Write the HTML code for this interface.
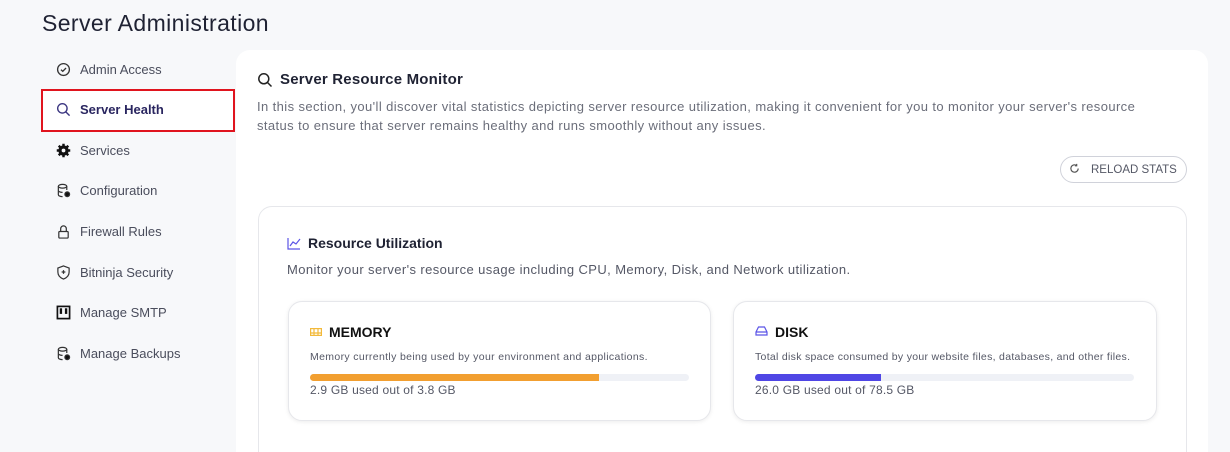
<!DOCTYPE html><html><head><style>
*{margin:0;padding:0;box-sizing:border-box}
html,body{width:1230px;height:452px;overflow:hidden}
body{background:#f7f8fa;font-family:"Liberation Sans",sans-serif;position:relative;color:#1f2233}
.a{position:absolute}
h1{position:absolute;left:42px;top:10px;font-size:23px;font-weight:400;color:#1f2233;letter-spacing:.4px}
.nav{left:56px;font-size:13px;color:#4a4d5c;display:flex;align-items:center;gap:9px}
.nav svg{width:15px;height:15px}
.panel{left:236px;top:50px;width:972px;height:402px;background:#fff;border-radius:14px 14px 0 0}
.card{background:#fff;border:1px solid #e6e7eb;border-radius:14px}
.sm{box-shadow:0 1px 4px rgba(0,0,0,.08)}
</style></head><body>
<h1>Server Administration</h1>
<div class="a nav" style="top:62px"><svg viewBox="0 0 16 16" fill="none" stroke="#333" stroke-width="1.4"><circle cx="8" cy="8" r="6.3"/><path d="M5.3 8.2l1.9 1.8 3.5-3.6"/></svg>Admin Access</div>
<div class="a" style="left:41px;top:89px;width:194px;height:43px;border:2px solid #e0141e;background:#fff"></div>
<div class="a nav" style="top:102px;color:#2a2660;font-weight:bold"><svg viewBox="0 0 16 16" fill="none" stroke="#3a3580" stroke-width="1.5"><circle cx="6.8" cy="6.8" r="5"/><path d="M10.5 10.5l4 4"/></svg>Server Health</div>
<div class="a nav" style="top:143px"><svg viewBox="0 0 16 16"><circle cx="8" cy="8" r="5.5" fill="#111"/><circle cx="8" cy="8" r="2" fill="#f7f8fa"/><path d="M8 0.8v3M8 12.2v3M0.8 8h3M12.2 8h3M2.9 2.9l2.1 2.1M11 11l2.1 2.1M2.9 13.1l2.1-2.1M11 5l2.1-2.1" stroke="#111" stroke-width="2.6"/></svg>Services</div>
<div class="a nav" style="top:183px"><svg viewBox="0 0 16 16" fill="none" stroke="#333" stroke-width="1.3"><ellipse cx="7" cy="3.5" rx="4.5" ry="2"/><path d="M2.5 3.5v9c0 1.1 2 2 4.5 2M11.5 3.5v4M2.5 8c0 1.1 2 2 4.5 2"/><circle cx="12" cy="12" r="2.5" fill="#111"/></svg>Configuration</div>
<div class="a nav" style="top:224px"><svg viewBox="0 0 16 16" fill="none" stroke="#333" stroke-width="1.3"><rect x="3" y="8" width="10" height="7" rx="1"/><path d="M5 8V5a3 3 0 0 1 6 0v3"/></svg>Firewall Rules</div>
<div class="a nav" style="top:265px"><svg viewBox="0 0 16 16" fill="none" stroke="#333" stroke-width="1.3"><path d="M8 1l6 2.2v4.3c0 3.6-2.6 6.2-6 7.5-3.4-1.3-6-3.9-6-7.5V3.2z"/><path d="M8 5.5v4M6 7.5h4"/></svg>Bitninja Security</div>
<div class="a nav" style="top:305px"><svg viewBox="0 0 16 16"><rect x="1.5" y="1.5" width="13" height="13" fill="none" stroke="#111" stroke-width="1.8"/><rect x="4" y="3.5" width="2.5" height="6" fill="#111"/><rect x="9.5" y="3.5" width="2.5" height="6" fill="#111"/></svg>Manage SMTP</div>
<div class="a nav" style="top:346px"><svg viewBox="0 0 16 16" fill="none" stroke="#333" stroke-width="1.3"><ellipse cx="7" cy="3.5" rx="4.5" ry="2"/><path d="M2.5 3.5v9c0 1.1 2 2 4.5 2M11.5 3.5v4M2.5 8c0 1.1 2 2 4.5 2"/><circle cx="12" cy="12" r="2.5" fill="#111"/></svg>Manage Backups</div>

<div class="a panel"></div>
<svg class="a" style="left:257px;top:72px" width="16" height="16" viewBox="0 0 16 16" fill="none" stroke="#222" stroke-width="1.5"><circle cx="6.8" cy="6.8" r="5"/><path d="M10.5 10.5l4 4"/></svg>
<div class="a" style="left:280px;top:71px;font-size:15px;font-weight:bold;color:#1f2233;letter-spacing:.2px">Server Resource Monitor</div>
<div class="a" style="left:257px;top:97px;width:905px;font-size:13px;line-height:19px;color:#6b6e7a;letter-spacing:.4px">In this section, you'll discover vital statistics depicting server resource utilization, making it convenient for you to monitor your server's resource status to ensure that server remains healthy and runs smoothly without any issues.</div>
<div class="a" style="left:1060px;top:156px;width:127px;height:27px;border:1px solid #d0d2da;border-radius:14px;font-size:11.5px;color:#555866;display:flex;align-items:center;padding-left:30px;white-space:nowrap">RELOAD STATS</div>
<svg class="a" style="left:1069px;top:163px" width="11" height="11" viewBox="0 0 12 12" fill="none" stroke="#555" stroke-width="1.3"><path d="M10 6a4 4 0 1 1-1.6-3.2M8.4 1v2h-2"/></svg>

<div class="a card" style="left:258px;top:206px;width:929px;height:260px"></div>
<svg class="a" style="left:287px;top:237px" width="14" height="13" viewBox="0 0 14 13" fill="none" stroke="#5b54e6" stroke-width="1.2"><path d="M1 1v11h12M3 9l3-4 3 2 4-5"/></svg>
<div class="a" style="left:308px;top:235px;font-size:14px;font-weight:bold">Resource Utilization</div>
<div class="a" style="left:287px;top:262px;font-size:13px;color:#555866;letter-spacing:.4px">Monitor your server's resource usage including CPU, Memory, Disk, and Network utilization.</div>

<div class="a card sm" style="left:288px;top:301px;width:423px;height:120px"></div>
<svg class="a" style="left:310px;top:328px" width="12" height="8" viewBox="0 0 12 8" fill="none" stroke="#f2b93a" stroke-width="1.2"><rect x=".6" y=".6" width="10.8" height="6.8"/><path d="M4 .6v6.8M8 .6v6.8M.6 5h10.8"/></svg>
<div class="a" style="left:329px;top:324px;font-size:14px;font-weight:bold;color:#111">MEMORY</div>
<div class="a" style="left:310px;top:351px;font-size:10.5px;color:#555866;letter-spacing:.35px">Memory currently being used by your environment and applications.</div>
<div class="a" style="left:310px;top:374px;width:379px;height:7px;background:#eff1f6;border-radius:4px"><div style="width:289px;height:7px;background:#f29f30;border-radius:4px 0 0 4px"></div></div>
<div class="a" style="left:310px;top:383px;font-size:12px;color:#555866;letter-spacing:.2px">2.9 GB used out of 3.8 GB</div>

<div class="a card sm" style="left:733px;top:301px;width:424px;height:120px"></div>
<svg class="a" style="left:755px;top:326px" width="13" height="10" viewBox="0 0 13 10" fill="none" stroke="#5b54e6" stroke-width="1.2"><path d="M1 6l2.5-5h6L12 6v3H1zM1 6h11"/></svg>
<div class="a" style="left:775px;top:324px;font-size:14px;font-weight:bold;color:#111">DISK</div>
<div class="a" style="left:755px;top:351px;font-size:10.5px;color:#555866;letter-spacing:.3px">Total disk space consumed by your website files, databases, and other files.</div>
<div class="a" style="left:755px;top:374px;width:379px;height:7px;background:#eff1f6;border-radius:4px"><div style="width:126px;height:7px;background:#4f46e5;border-radius:4px 0 0 4px"></div></div>
<div class="a" style="left:755px;top:383px;font-size:12px;color:#555866;letter-spacing:.2px">26.0 GB used out of 78.5 GB</div>
</body></html>
